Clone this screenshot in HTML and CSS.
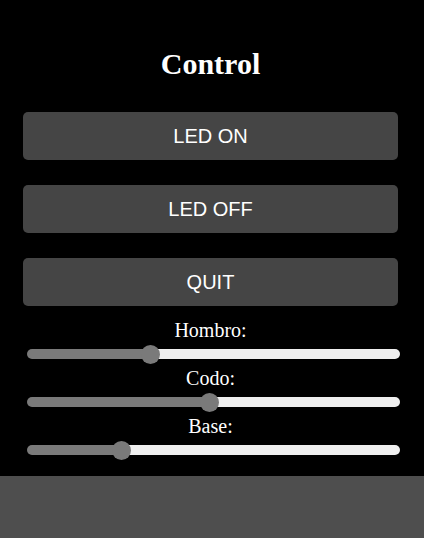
FILE: index.html
```html
<!DOCTYPE html>
<html lang="es">
<head>
<meta charset="utf-8">
<title>Control</title>
<link rel="stylesheet" href="styles.css">
</head>
<body>
<main class="panel">
  <h1 class="title">Control</h1>
  <div class="buttons">
    <button class="btn" type="button">LED ON</button>
    <button class="btn" type="button">LED OFF</button>
    <button class="btn" type="button">QUIT</button>
  </div>
  <div class="sliders">
    <label class="label" for="hombro">Hombro:</label>
    <input class="slider" id="hombro" type="range" min="0" max="180" value="58" style="--p:0.322">
    <label class="label" for="codo">Codo:</label>
    <input class="slider" id="codo" type="range" min="0" max="180" value="88" style="--p:0.489">
    <label class="label" for="base">Base:</label>
    <input class="slider" id="base" type="range" min="0" max="180" value="43" style="--p:0.239">
  </div>
</main>
</body>
</html>
```
FILE: styles.css
```css
html, body {
  margin: 0;
  padding: 0;
}
body {
  background: #4e4e4e;
  font-family: "Liberation Serif", "Times New Roman", serif;
  color: #fff;
}
.panel {
  background: #000;
  padding: 46px 26px 13px 23px;
}
.title {
  margin: 0 0 31px;
  font-size: 30px;
  line-height: 35px;
  font-weight: bold;
  text-align: center;
}
.buttons {
  display: flex;
  flex-direction: column;
  gap: 25px;
}
.btn {
  display: block;
  width: 100%;
  height: 48px;
  border: none;
  border-radius: 5px;
  background: #454545;
  color: #fff;
  font-family: "Liberation Sans", Arial, sans-serif;
  font-size: 20px;
  padding: 0;
}
.sliders {
  margin-top: 13px;
}
.label {
  display: block;
  text-align: center;
  font-size: 20px;
  line-height: 23px;
}
.slider {
  -webkit-appearance: none;
  appearance: none;
  display: block;
  width: 373px;
  height: 10px;
  margin: 7px 0 8px 4px;
  padding: 0;
  border: none;
  border-radius: 5px;
  outline: none;
  background: linear-gradient(to right, #7a7a7a calc(9.5px + var(--p) * 354px), #efefef 0);
}
.slider::-webkit-slider-runnable-track {
  height: 10px;
  background: transparent;
  border: none;
}
.slider::-webkit-slider-thumb {
  -webkit-appearance: none;
  appearance: none;
  width: 19px;
  height: 19px;
  margin-top: -4.5px;
  border: none;
  border-radius: 50%;
  background: #7a7a7a;
}
```
